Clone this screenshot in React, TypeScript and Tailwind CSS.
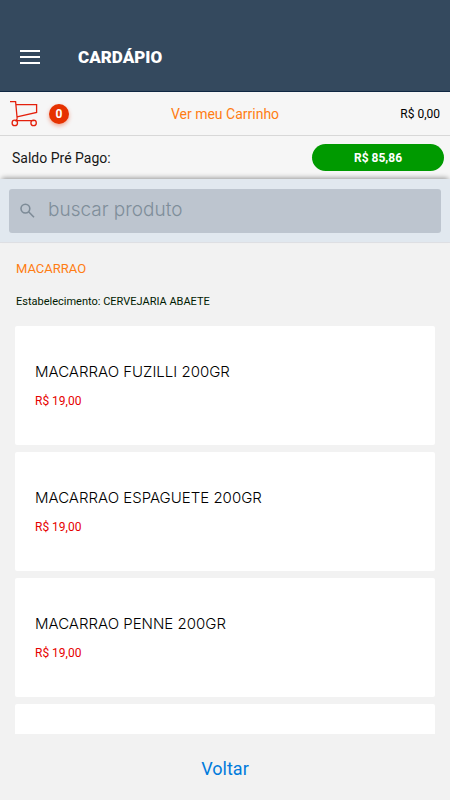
const products = [
    { id: 1, name: "MACARRAO FUZILLI 200GR", price: "R$ 19,00" },
    { id: 2, name: "MACARRAO ESPAGUETE 200GR", price: "R$ 19,00" },
    { id: 3, name: "MACARRAO PENNE 200GR", price: "R$ 19,00" },
];

function CartIcon() {
    return (
        <svg className="w-7 h-7" viewBox="0 0 28 28" fill="none" stroke="#e4200c" strokeWidth="1.3" aria-hidden="true">
            <path d="M0 1.6H5.6L7.2 18.8M6 4.6H26.6V12.4L7 16.8M5.6 21.4L7.2 18.8M5.6 20.6H24.5" />
            <circle cx="4.8" cy="22.9" r="2.7" />
            <circle cx="23.6" cy="22.9" r="2.7" />
        </svg>
    );
}

function Header() {
    return (
        <header className="h-[92px] shrink-0 bg-[#34495e] border-b border-[#0f2742] flex items-center px-5 pt-[22px]">
            <button type="button" aria-label="Menu" className="w-5 h-5 flex items-center">
                <svg className="w-5 h-5" viewBox="0 0 20 20" fill="none" stroke="#fff" strokeWidth="2" aria-hidden="true">
                    <path d="M0 4H20M0 10H20M0 16H20" />
                </svg>
            </button>
            <h1 className="ml-[38px] text-[17px] leading-5 font-black text-white">
                CARDÁPIO
            </h1>
        </header>
    );
}

function CartBar() {
    return (
        <div className="h-11 shrink-0 bg-[#f6f6f6] border-b border-[#d8d8d8] grid grid-cols-[1fr_auto_1fr] items-center px-[10px]">
            <div className="flex items-center gap-[11px]">
                <CartIcon />
                <span className="w-5 h-5 rounded-full bg-[#e63200] text-white text-xs font-bold flex items-center justify-center shadow-[0_2px_4px_rgba(230,50,0,0.4)]">
                    0
                </span>
            </div>
            <a href="#carrinho" className="text-sm text-[#ff7d13]">Ver meu Carrinho</a>
            <span className="text-xs text-black text-right">R$ 0,00</span>
        </div>
    );
}

function BalanceBar() {
    return (
        <div className="h-[43px] shrink-0 bg-[#f6f6f6] flex items-center justify-between pl-3 pr-[6px]">
            <span className="text-sm text-[#181818]">Saldo Pré Pago:</span>
            <span className="w-[132px] h-[27px] rounded-full bg-[#009a00] text-white text-xs font-bold flex items-center justify-center">
                R$ 85,86
            </span>
        </div>
    );
}

function SearchBar() {
    return (
        <div className="relative h-16 shrink-0 bg-[#e1e8ef] border-b border-[#dedfe3] px-[9px] flex items-center shadow-[0_-3px_5px_-2px_rgba(0,0,0,0.4)]">
            <label className="flex-1 h-11 rounded-[3px] bg-[#bdc5cf] flex items-center pl-[11px] gap-3">
                <svg className="w-4 h-4 shrink-0" viewBox="0 0 16 16" fill="none" stroke="#7d8b97" strokeWidth="1.6" aria-hidden="true">
                    <circle cx="5.4" cy="5.6" r="4.4" />
                    <path d="M8.6 8.8L14 14.2" />
                </svg>
                <input
                    type="text"
                    aria-label="buscar produto"
                    placeholder="buscar produto"
                    className="flex-1 min-w-0 h-7 bg-transparent outline-none text-[19px] font-light font-['Inter',sans-serif] placeholder:text-[#7f8e9a]"
                />
            </label>
        </div>
    );
}

function ProductCard({ name, price }: { name: string; price: string }) {
    return (
        <li className="h-[119px] shrink-0 bg-white rounded-[2px] px-5 pt-9">
            <h3 className="text-[15px] leading-5 font-light text-black font-['Inter',sans-serif]">{name}</h3>
            <p className="mt-[10px] text-xs leading-[18px] text-[#e60000]">{price}</p>
        </li>
    );
}

export default function App() {
    return (
        <div className="h-screen flex flex-col bg-[#f2f2f2] font-['Roboto',sans-serif]">
            <Header />
            <CartBar />
            <BalanceBar />
            <SearchBar />
            <main className="flex-1 min-h-0 overflow-hidden px-[15px]">
                <h2 className="mt-4 px-px text-[13px] leading-5 text-[#ff7d13]">MACARRAO</h2>
                <p className="mt-[14px] px-px text-[11px] leading-[18px] text-[#001a00]">
                    Estabelecimento: CERVEJARIA ABAETE
                </p>
                <ul className="mt-[15px] flex flex-col gap-[7px]">
                    {products.map((product) => (
                        <ProductCard key={product.id} name={product.name} price={product.price} />
                    ))}
                    <li className="h-[119px] shrink-0 bg-white rounded-[2px]"></li>
                </ul>
            </main>
            <footer className="h-[66px] shrink-0 flex items-center justify-center pt-1">
                <button type="button" className="text-lg text-[#007bdc]">Voltar</button>
            </footer>
        </div>
    );
}
